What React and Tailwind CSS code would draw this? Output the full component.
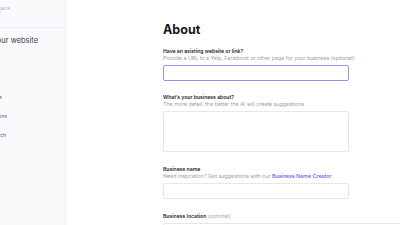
import React from "react";

function Field({ label, optional, help, children }) {
  return (
    <div className="flex flex-col">
      <p className="whitespace-nowrap text-[5.1px] leading-[8px] font-semibold text-[#1f2330]">
        {label}
        {optional && <span className="font-normal text-[#a3a6b1]"> (optional)</span>}
      </p>
      {help && <p className="whitespace-nowrap text-[5.3px] leading-[7px] text-[#9a9daa]">{help}</p>}
      {children}
    </div>
  );
}

export default function App() {
  const navItems = ["Business type", "Visual style", "Website pages", "Content sections", "Publish & launch"];

  return (
    <div className="flex h-[225px] w-[400px] overflow-hidden bg-white font-['Inter',sans-serif]">
      <aside className="flex w-[66px] shrink-0 flex-col overflow-hidden border-r border-[#eeeef3] bg-[#fafafc]">
        <div className="h-[28px] shrink-0 border-b border-[#f0f0f4] pt-[7px]">
          <div className="-ml-[14px] flex flex-col">
            <span className="text-[3.5px] leading-[4px] tracking-wide text-[#8a8d99]">STUDIO BETA</span>
            <span className="text-[4px] leading-[4px] font-semibold text-[#3a3d48]">WEB AI</span>
          </div>
        </div>
        <div className="-ml-[33px] w-[120px] pt-[8px]">
          <h2 className="whitespace-nowrap text-[7.5px] leading-[10px] text-[#3d404b]">Create your website</h2>
          <ul className="mt-[9px] flex flex-col gap-[11px]">
            {navItems.map((item, i) => (
              <li
                key={item}
                className={
                  "whitespace-nowrap text-[5px] leading-[8px] " +
                  (i === 0 ? "text-[#4f7ad9]" : "text-[#5a5d68]")
                }
              >
                {item}
              </li>
            ))}
          </ul>
        </div>
      </aside>

      <main className="flex-1 pl-[97px] pt-[22px]">
        <div className="flex w-[186px] flex-col">
          <h1 className="text-[12.5px] leading-[16px] font-bold text-[#15171f]">About</h1>

          <div className="mt-[9px]">
            <Field
              label="Have an existing website or link?"
              help="Provide a URL to a Yelp, Facebook or other page for your business (optional)"
            >
              <input className="mt-[3px] h-[16px] w-full rounded-[2px] border border-[#a58af2] bg-white outline-none" />
            </Field>
          </div>

          <div className="mt-[12px]">
            <Field
              label="What’s your business about?"
              help="The more detail, the better the AI will create suggestions"
            >
              <textarea className="mt-[3px] h-[41px] w-full resize-none rounded-[2px] border border-[#e6e7ec] bg-white outline-none" />
            </Field>
          </div>

          <div className="mt-[13px]">
            <Field
              label="Business name"
              help={
                <>
                  Need inspiration? Get suggestions with our{" "}
                  <span className="font-medium text-[#7a4df0]">Business Name Creator</span>
                </>
              }
            >
              <input className="mt-[3px] h-[16px] w-full rounded-[2px] border border-[#e6e7ec] bg-white outline-none" />
            </Field>
          </div>

          <div className="mt-[13px]">
            <Field label="Business location" optional>
              <div className="mt-[3px] flex gap-[4px]">
                <input className="h-[16px] flex-1 rounded-[2px] border border-[#e6e7ec] bg-white outline-none" />
                <button className="h-[16px] w-[15px] rounded-[2px] bg-[#eceef3]" />
              </div>
            </Field>
          </div>
        </div>
      </main>
    </div>
  );
}
